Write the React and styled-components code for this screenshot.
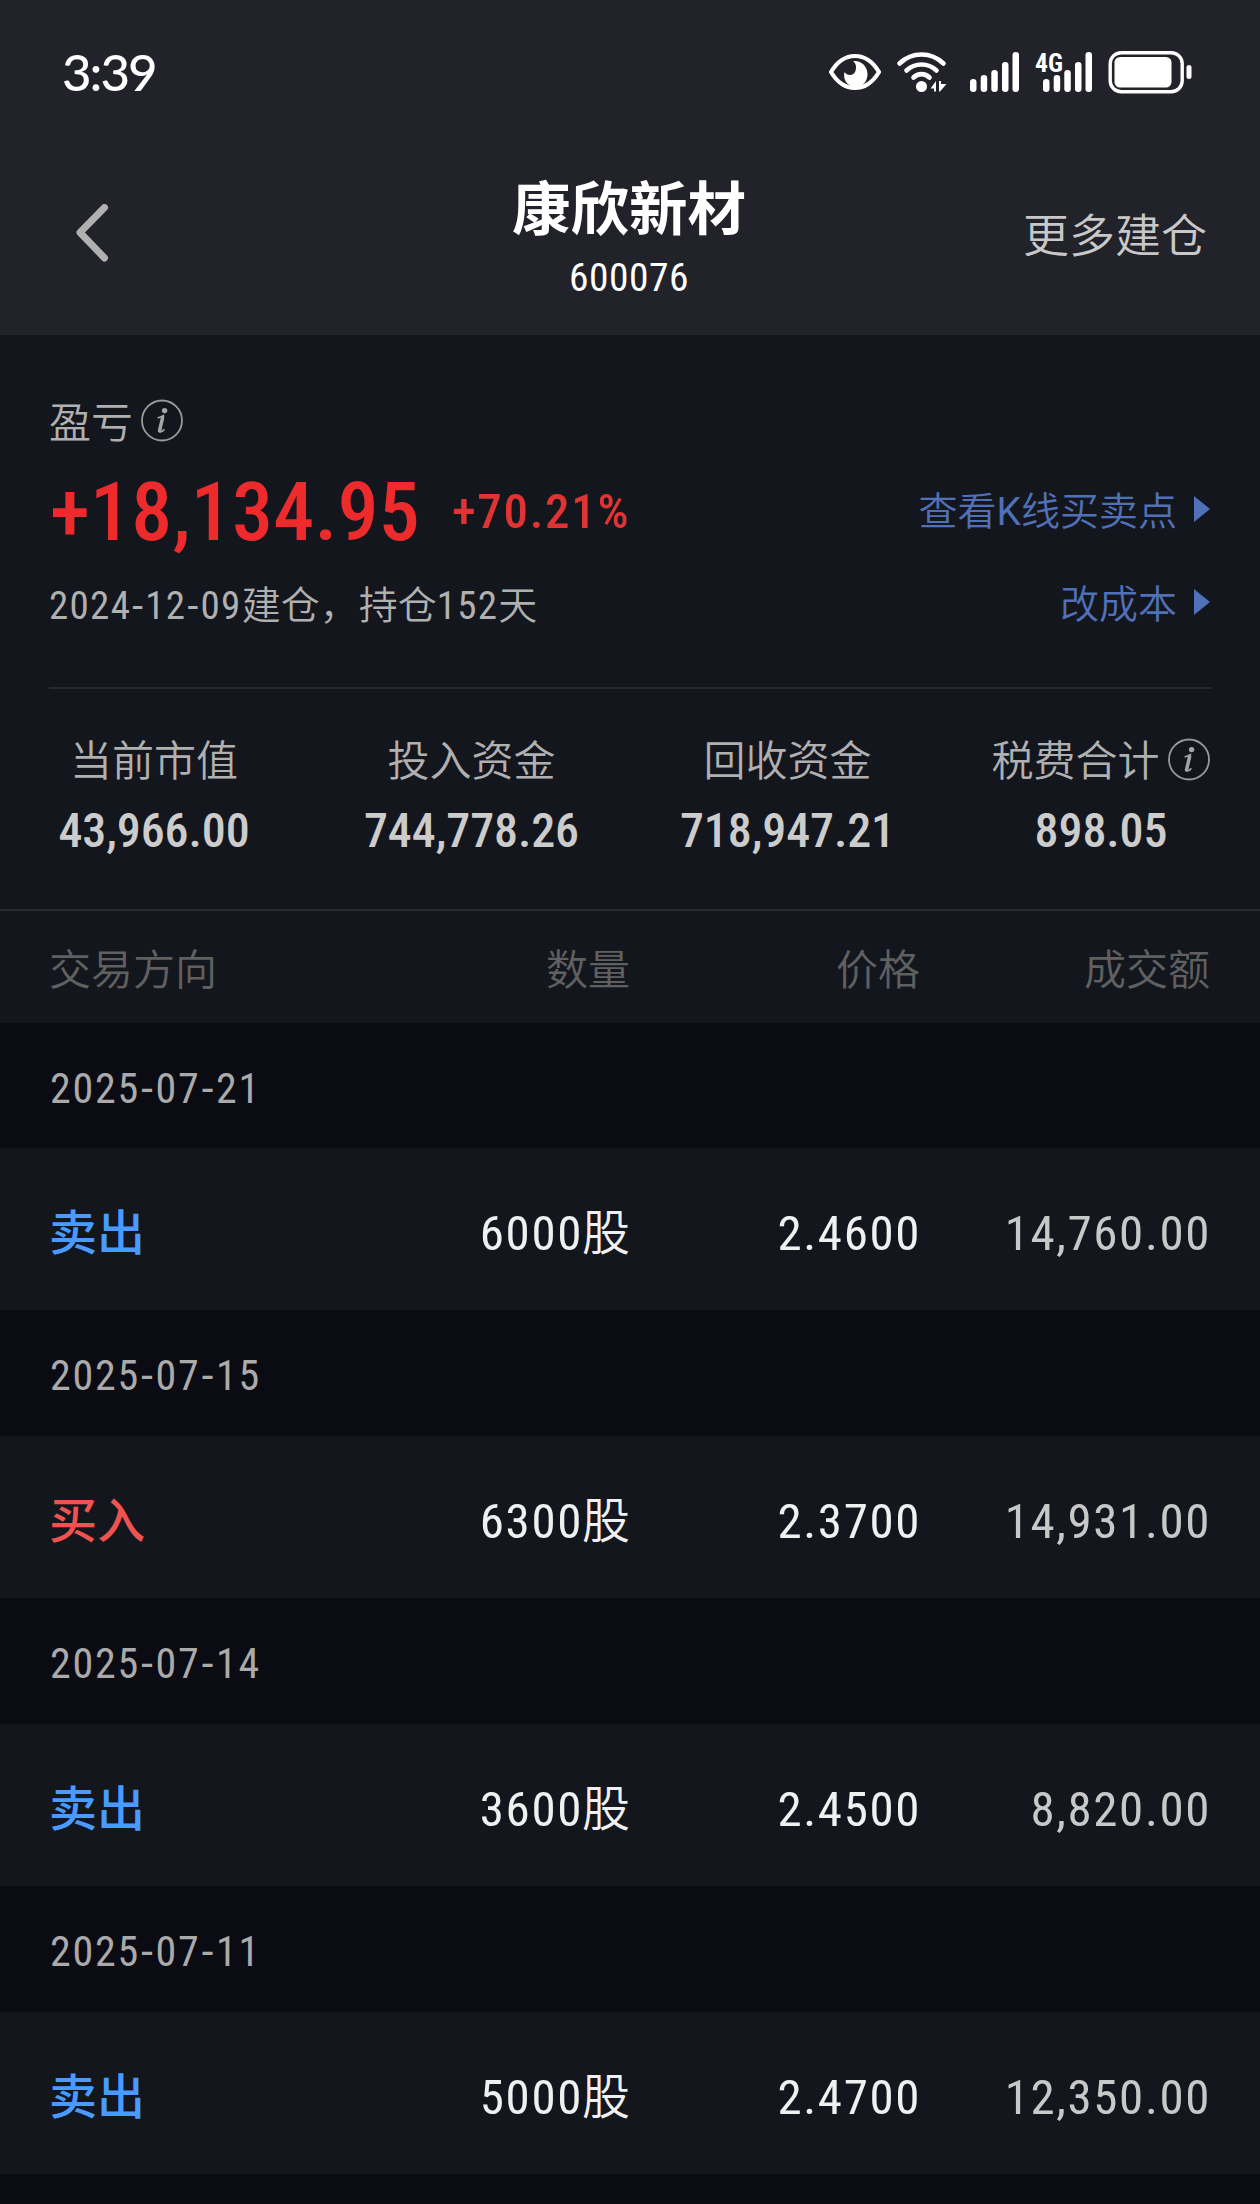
import { Fragment } from "react";
import styled, { createGlobalStyle } from "styled-components";

const stats = [
  { name: "当前市值", value: "43,966.00" },
  { name: "投入资金", value: "744,778.26" },
  { name: "回收资金", value: "718,947.21" },
  { name: "税费合计", value: "898.05", info: true },
];

const trades = [
  { date: "2025-07-21", side: "sell", count: "6000", price: "2.4600", amount: "14,760.00" },
  { date: "2025-07-15", side: "buy", count: "6300", price: "2.3700", amount: "14,931.00" },
  { date: "2025-07-14", side: "sell", count: "3600", price: "2.4500", amount: "8,820.00" },
  { date: "2025-07-11", side: "sell", count: "5000", price: "2.4700", amount: "12,350.00" },
];

const GlobalStyle = createGlobalStyle`
  * {
    box-sizing: border-box;
  }
  body {
    margin: 0;
    background: #0b0b13;
    font-family: Roboto, "Noto Sans CJK SC", sans-serif;
    font-stretch: 84%;
  }
  h1, p, ul {
    margin: 0;
    padding: 0;
  }
`;

const Page = styled.div`
  width: 1260px;
  height: 2204px;
  overflow: hidden;
  background: #0b0b13;
`;

const Header = styled.header`
  height: 335px;
  background: #22222a;
`;

const StatusBar = styled.div`
  display: flex;
  align-items: center;
  justify-content: space-between;
  height: 144px;
  padding: 0 67px 0 62px;
`;

const Clock = styled.span`
  font-family: Lato, sans-serif;
  font-size: 51px;
  font-weight: 500;
  line-height: 60px;
  letter-spacing: -2px;
  color: #fff;
`;

const StatusIcons = styled.div`
  display: flex;
  align-items: center;
  height: 44px;

  svg {
    display: block;
    overflow: visible;
  }
`;

const NavBar = styled.div`
  display: grid;
  grid-template-columns: 1fr auto 1fr;
  align-items: center;
  height: 178px;
  padding: 0 53px 0 76px;
`;

const TitleBlock = styled.div`
  padding-top: 11px;
  margin-left: -25px;
  text-align: center;
`;

const Title = styled.h1`
  font-size: 58.5px;
  font-weight: 600;
  line-height: 60px;
  color: #fff;
`;

const Code = styled.p`
  margin-top: 18px;
  font-size: 39.5px;
  line-height: 40px;
  letter-spacing: 0.5px;
  color: #fff;
`;

const More = styled.span`
  justify-self: end;
  padding-top: 6px;
  font-size: 46px;
  font-weight: 350;
  line-height: 50px;
  color: #c8c8c8;
`;

const Summary = styled.section`
  background: #14161e;
  padding: 63px 49px 0;
`;

const LabelRow = styled.div`
  display: flex;
  align-items: center;
  gap: 8px;
  height: 44px;
`;

const Label = styled.span`
  padding-top: 7px;
  font-size: 42px;
  font-weight: 350;
  line-height: 44px;
  color: #b0b0b0;
`;

const ProfitRow = styled.div`
  display: flex;
  align-items: center;
  height: 84px;
  margin-top: 28px;
`;

const Profit = styled.span`
  margin-left: 1px;
  font-size: 82px;
  font-weight: 500;
  line-height: 84px;
  letter-spacing: 0.2px;
  color: #ed2b2c;
`;

const Percent = styled.span`
  margin-left: 32px;
  font-size: 49px;
  font-weight: 500;
  line-height: 84px;
  letter-spacing: 1.7px;
  color: #e03333;
`;

const NoteRow = styled.div`
  display: flex;
  align-items: center;
  height: 44px;
  margin-top: 29px;
`;

const Note = styled.span`
  padding-top: 2px;
  font-size: 39px;
  font-weight: 350;
  line-height: 44px;
  color: #b0b0b0;
`;

const Digits = styled.span`
  font-weight: 400;
  letter-spacing: 1.3px;
`;

const Dash = styled.span`
  margin: 0 1px;
  font-stretch: 100%;
`;

const LinkButton = styled.span`
  display: flex;
  align-items: center;
  gap: 17px;
  height: 44px;
  margin-left: auto;
  margin-top: -6px;
  font-size: 39px;
  font-weight: 350;
  line-height: 44px;
  color: #5070b8;
`;

const LinkText = styled.span`
  padding-top: 6px;
`;

const Latin = styled.span`
  font-weight: 400;
  font-stretch: 100%;
`;

const Divider = styled.div`
  height: 2px;
  margin-top: 60px;
  background: #2a2b32;
`;

const Stats = styled.ul`
  display: grid;
  grid-template-columns: 308px 327px 305px 322px;
  height: 222px;
  padding-top: 51px;
  list-style: none;
  background: #14161e;
  border-bottom: 2px solid #2a2b32;
`;

const Stat = styled.li`
  display: flex;
  flex-direction: column;
  align-items: center;
  gap: 23px;
`;

const StatName = styled.div`
  display: flex;
  align-items: center;
  gap: 8px;
  height: 44px;
  font-size: 42px;
  font-weight: 350;
  line-height: 44px;
  color: #b0b0b0;

  svg {
    margin-top: -6px;
  }
`;

const StatValue = styled.div`
  font-size: 48px;
  font-weight: 500;
  line-height: 48px;
  letter-spacing: -0.1px;
  color: #cccccc;
`;

const Row = styled.div`
  display: grid;
  grid-template-columns: 291px 290px 290px 290px;
  align-items: center;
  padding: 9px 49px 0;
  text-align: right;
  background: #14161e;
`;

const TableHead = styled(Row)`
  height: 112px;
  padding-top: 8px;
  font-size: 42px;
  font-weight: 350;
  line-height: 44px;
  color: #606060;
`;

const DateRow = styled.div`
  display: flex;
  align-items: center;
  height: 126px;
  padding: 6px 49px 0 50px;
  font-size: 42px;
  line-height: 44px;
  letter-spacing: 1.8px;
  color: #aaaaaa;

  &:first-child {
    height: ${(props) => (props.$first ? "125px" : "126px")};
  }
`;

const TradeRow = styled(Row)`
  height: 162px;
  font-size: 49px;
  line-height: 60px;
  color: #f0f0f0;
`;

const Left = styled.span`
  text-align: left;
`;

const Side = styled.span`
  text-align: left;
  font-size: 48px;
  font-weight: 500;
  color: ${(props) => (props.$side === "buy" ? "#ef5350" : "#4a9bff")};
`;

const Unit = styled.span`
  font-size: 48px;
  font-weight: 350;
`;

const Value = styled.span`
  margin-right: -1px;
  letter-spacing: 1.6px;
  color: ${(props) => (props.$dim ? "#c8c8c8" : "inherit")};
`;

const DateText = ({ value }) => (
  <span>
    {value.split("-").map((part, index) => (
      <Fragment key={index}>
        {index > 0 && <Dash>-</Dash>}
        {part}
      </Fragment>
    ))}
  </span>
);

const Signal = ({ label }) => (
  <svg width="60" height="44" viewBox="0 0 60 44" fill="#fff">
    <rect x="8" y="29" width="6.5" height="13" rx="3.2" />
    <rect x="18.7" y="25" width="6.5" height="17" rx="3.2" />
    <rect x="29.3" y="20" width="6.5" height="22" rx="3.2" />
    <rect x="40" y="12" width="6.5" height="30" rx="3.2" />
    <rect x="50.5" y="2" width="6.5" height="40" rx="3.2" />
    {label && (
      <text
        x="0"
        y="21.5"
        fontFamily="Roboto, sans-serif"
        fontSize="26"
        fontWeight="700"
        textLength="28"
        lengthAdjust="spacingAndGlyphs"
      >
        {label}
      </text>
    )}
  </svg>
);

const InfoIcon = () => (
  <svg width="43" height="43" viewBox="0 0 43 43" fill="none">
    <circle cx="21" cy="21.5" r="20" stroke="#999" strokeWidth="1.8" />
    <circle cx="23.6" cy="11.6" r="2.7" fill="#a5a5a5" />
    <path
      d="M16.6 18.9C18.8 18.3 20.8 17.4 22.4 16.6C22.2 19.4 19.8 27.4 19.2 31.6C19 33.6 20.8 33 23.4 30.4"
      stroke="#a5a5a5"
      strokeWidth="1.6"
    />
    <path d="M21.6 18.5L18.5 32" stroke="#a5a5a5" strokeWidth="3.4" strokeLinecap="round" />
  </svg>
);

const Triangle = () => (
  <svg width="17" height="26" viewBox="0 0 17 26">
    <path d="M0 0L16 13L0 26Z" fill="#5070b8" />
  </svg>
);

const App = () => {
  return (
    <>
      <GlobalStyle />
      <Page>
        <Header>
          <StatusBar>
            <Clock>3:39</Clock>
            <StatusIcons>
              {/* eye comfort */}
              <svg width="68" height="44" viewBox="0 0 68 44" fill="none">
                <path
                  d="M2 22C8 12 16.5 6 26 6S44 12 50 22C44 32 35.5 38 26 38S8 32 2 22Z"
                  stroke="#fff"
                  strokeWidth="4.2"
                  strokeLinejoin="round"
                />
                <path
                  d="M24 11C32 10 38.5 16 38.5 24C38.5 32 33 37 26.5 37C19 37 13.5 30 15.5 22C18 26 24 26 26 22C28 18 27 13 24 11Z"
                  fill="#fff"
                />
              </svg>
              {/* wifi */}
              <svg width="65" height="44" viewBox="0 0 65 44" fill="none">
                <g stroke="#fff" strokeWidth="4.6" strokeLinecap="round">
                  <path d="M2.5 13.5C15 1.5 34 1.5 46.5 13.5" />
                  <path d="M9.5 20.5C18 12.5 31 12.5 39.5 20.5" />
                  <path d="M16.5 27.5C21 23 28 23 32.5 27.5" />
                </g>
                <circle cx="24.5" cy="36.5" r="5.5" fill="#fff" />
                <path d="M33.5 38.5L39 31V41.5H37V38.5ZM42 31H44V34H49.5L43 41.5H42Z" fill="#fff" />
              </svg>
              <Signal />
              <svg width="13" height="44" />
              <Signal label="4G" />
              {/* battery */}
              <svg width="98" height="44" viewBox="0 0 98 44" fill="none">
                <rect x="15.2" y="2.7" width="72" height="39" rx="11" stroke="#fff" strokeWidth="3.4" />
                <rect x="19.5" y="7" width="57" height="30.5" rx="5.5" fill="#fff" />
                <rect x="91.5" y="15" width="5" height="14" rx="2.5" fill="#fff" />
              </svg>
            </StatusIcons>
          </StatusBar>
          <NavBar>
            <svg width="34" height="58" viewBox="0 0 34 58" fill="none">
              <path
                d="M28.5 3.5L4 28.5L28.5 54"
                stroke="#b0b0b0"
                strokeWidth="7"
                strokeLinecap="round"
                strokeLinejoin="round"
              />
            </svg>
            <TitleBlock>
              <Title>康欣新材</Title>
              <Code>600076</Code>
            </TitleBlock>
            <More>更多建仓</More>
          </NavBar>
        </Header>

        <Summary>
          <LabelRow>
            <Label>盈亏</Label>
            <InfoIcon />
          </LabelRow>
          <ProfitRow>
            <Profit>+18,134.95</Profit>
            <Percent>+70.21%</Percent>
            <LinkButton>
              <LinkText>
                查看<Latin>K</Latin>线买卖点
              </LinkText>
              <Triangle />
            </LinkButton>
          </ProfitRow>
          <NoteRow>
            <Note>
              <Digits>
                <DateText value="2024-12-09" />
              </Digits>
              建仓，持仓<Digits>152</Digits>天
            </Note>
            <LinkButton>
              <LinkText>改成本</LinkText>
              <Triangle />
            </LinkButton>
          </NoteRow>
          <Divider />
        </Summary>

        <Stats>
          {stats.map((item) => (
            <Stat key={item.name}>
              <StatName>
                {item.name}
                {item.info && <InfoIcon />}
              </StatName>
              <StatValue>{item.value}</StatValue>
            </Stat>
          ))}
        </Stats>

        <TableHead>
          <Left>交易方向</Left>
          <span>数量</span>
          <span>价格</span>
          <span>成交额</span>
        </TableHead>
        {trades.map((trade, index) => (
          <div key={trade.date}>
            <DateRow $first={index === 0}>
              <DateText value={trade.date} />
            </DateRow>
            <TradeRow>
              <Side $side={trade.side}>{trade.side === "buy" ? "买入" : "卖出"}</Side>
              <span>
                <Value>{trade.count}</Value>
                <Unit>股</Unit>
              </span>
              <Value>{trade.price}</Value>
              <Value $dim>{trade.amount}</Value>
            </TradeRow>
          </div>
        ))}
      </Page>
    </>
  );
};

export default App;
